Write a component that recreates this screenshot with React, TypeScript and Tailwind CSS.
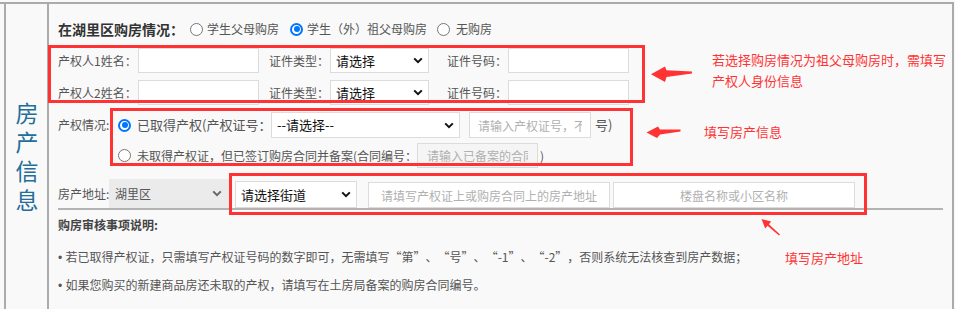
import React from "react";

function Radio({ checked }: { checked?: boolean }) {
  if (checked) {
    return (
      <span className="w-[13px] h-[13px] rounded-full border-2 border-[#0075ff] bg-white flex items-center justify-center shrink-0">
        <span className="w-[6px] h-[6px] rounded-full bg-[#0075ff]" />
      </span>
    );
  }
  return <span className="block w-[13px] h-[13px] rounded-full border border-[#767676] bg-white shrink-0" />;
}

function Chevron({ color = "#111" }: { color?: string }) {
  return (
    <svg width="10" height="7" viewBox="0 0 10 7" className="shrink-0">
      <path d="M1.2 1.4 L5 5.2 L8.8 1.4" stroke={color} strokeWidth="2" fill="none" />
    </svg>
  );
}

function Sel({ text, className }: { text: string; className: string }) {
  return (
    <div className={`flex items-center justify-between bg-white border border-[#dcdcdc] pl-[5px] pr-[5px] shrink-0 ${className}`}>
      <span className="text-[13px] text-[#111] whitespace-nowrap">{text}</span>
      <Chevron />
    </div>
  );
}

function Open() {
  return <span className="inline-block w-[12px] text-right">“</span>;
}
function Close() {
  return <span className="inline-block w-[12px] text-left">”</span>;
}

function Bullet() {
  return <span className="font-['Liberation_Sans',sans-serif]">•&nbsp;</span>;
}

export default function App() {
  return (
    <div className="relative w-[955px] h-[309px] bg-[#f9f9f9] pt-[2px] overflow-hidden font-['Noto_Sans_CJK_SC','Noto_Sans',sans-serif]">
      <div className="flex w-[954px] h-[320px] border-t-2 border-[#ababab]">
        <div className="w-[4px] shrink-0" />
        <div className="w-[45px] shrink-0 border-l-2 border-r-2 border-[#ababab] flex items-center justify-center pb-[6px]">
          <span className="[writing-mode:vertical-rl] text-[23px] leading-[23px] tracking-[6px] text-[#236d99]">房产信息</span>
        </div>
        <div className="flex-1 border-r-2 border-[#ababab] pl-[9px] pr-[9px] text-[12px] text-[#555]">
          {/* title row */}
          <div className="flex items-center h-[20px] mt-[15px]">
            <span className="w-[132px] text-[14px] font-bold text-[#333] whitespace-nowrap">在湖里区购房情况：</span>
            <Radio />
            <span className="ml-[4px] w-[72px] whitespace-nowrap">学生父母购房</span>
            <span className="ml-[11px]"><Radio checked /></span>
            <span className="ml-[4px] w-[120px] whitespace-nowrap">学生（外）祖父母购房</span>
            <span className="ml-[10px]"><Radio /></span>
            <span className="ml-[6px] whitespace-nowrap">无购房</span>
          </div>

          {/* owner rows */}
          {["产权人1姓名：", "产权人2姓名："].map((lbl, i) => (
            <div key={lbl} className={`flex items-center h-[25px] ${i === 0 ? "mt-[9px]" : "mt-[7px]"}`}>
              <span className="w-[80px] whitespace-nowrap">{lbl}</span>
              <input readOnly className="w-[121px] h-[25px] border border-[#dcdcdc] bg-white outline-none" />
              <span className="ml-[10px] w-[61px] whitespace-nowrap">证件类型：</span>
              <Sel text="请选择" className="w-[99px] h-[25px]" />
              <span className="ml-[18px] w-[61px] whitespace-nowrap">证件号码：</span>
              <input readOnly className="w-[121px] h-[25px] border border-[#dcdcdc] bg-white outline-none" />
            </div>
          ))}

          {/* property status */}
          <div className="flex items-center h-[26px] mt-[7px]">
            <span className="w-[60px] whitespace-nowrap">产权情况:</span>
            <Radio checked />
            <span className="ml-[6px] w-[134px] text-[13px] whitespace-nowrap">已取得产权(产权证号：</span>
            <Sel text="--请选择--" className="w-[189px] h-[26px]" />
            <input
              readOnly
              placeholder="请输入产权证号，不需要填写“第”"
              className="ml-[9px] w-[122px] h-[26px] border border-[#dcdcdc] bg-white px-[8px] text-[12px] outline-none placeholder:text-[#b0b0b0]"
            />
            <span className="ml-[4px] text-[13px] whitespace-nowrap">号)</span>
          </div>
          <div className="flex items-center h-[25px] mt-[5px]">
            <span className="w-[60px] shrink-0" />
            <Radio />
            <span className="ml-[6px] w-[280px] whitespace-nowrap">未取得产权证，但已签订购房合同并备案(合同编号：</span>
            <input
              readOnly
              placeholder="请输入已备案的合同编号"
              className="w-[121px] h-[25px] border border-[#dcdcdc] bg-[#f5f5f5] px-[9px] text-[12px] outline-none placeholder:text-[#b0b0b0]"
            />
            <span className="ml-[2px] whitespace-nowrap">)</span>
          </div>

          {/* address */}
          <div className="flex items-end mt-[11px] border-b-2 border-[#b3b3b3]">
            <span className="w-[51px] self-center whitespace-nowrap">房产地址:</span>
            <div className="w-[121px] h-[29px] bg-[#ebebeb] flex items-center justify-between pl-[6px] pr-[8px] shrink-0">
              <span className="text-[12px] text-[#555]">湖里区</span>
              <Chevron color="#666" />
            </div>
            <Sel text="请选择街道" className="ml-[5px] w-[122px] h-[27px]" />
            <input
              readOnly
              placeholder="请填写产权证上或购房合同上的房产地址"
              className="ml-[11px] w-[242px] h-[26px] border border-[#dcdcdc] bg-white text-center text-[12px] outline-none placeholder:text-[#b0b0b0]"
            />
            <input
              readOnly
              placeholder="楼盘名称或小区名称"
              className="ml-[3px] w-[242px] h-[26px] border border-[#dcdcdc] bg-white text-center text-[12px] outline-none placeholder:text-[#b0b0b0]"
            />
          </div>

          {/* notes */}
          <div className="mt-[5px] h-[20px] leading-[20px] font-bold text-[#444] whitespace-nowrap">购房审核事项说明:</div>
          <div className="mt-[12px] h-[20px] leading-[20px] whitespace-nowrap">
            <Bullet />若已取得产权证，只需填写产权证号码的数字即可，无需填写<Open />第<Close />、<Open />号<Close />、<Open />-1<Close />、<Open />-2<Close />，否则系统无法核查到房产数据；
          </div>
          <div className="mt-[8px] h-[20px] leading-[20px] whitespace-nowrap">
            <Bullet />如果您购买的新建商品房还未取的产权，请填写在土房局备案的购房合同编号。
          </div>
        </div>
      </div>

      {/* annotation overlays */}
      <div className="absolute left-[48px] top-[45px] w-[597px] h-[58px] border-[3px] border-[#ff3333]" />
      <div className="absolute left-[110px] top-[108px] w-[523px] h-[58px] border-[3px] border-[#ff3333]" />
      <div className="absolute left-[229px] top-[173px] w-[638px] h-[42px] border-[3px] border-[#ff3333]" />

      <svg className="absolute left-0 top-0 pointer-events-none" width="955" height="309" viewBox="0 0 955 309">
        <polygon points="651,74.3 665,66.5 666.5,70.3 692,71.5 692,73.5 666.5,77 665,82" fill="#ff3333" />
        <polygon points="646.5,132.5 658,126.5 660,129.5 680.5,129.5 680.5,131.5 660,134.5 657,138" fill="#ff3333" />
        <polygon points="761.5,219 771.2,221.6 768.9,224.3 780,234.4 779,235.6 767.5,225.7 765.2,228.4" fill="#ff3333" />
      </svg>

      <div className="absolute left-[712px] top-[49px] text-[13px] leading-[21px] text-[#ff3333] whitespace-nowrap">
        若选择购房情况为祖父母购房时，需填写
        <br />
        产权人身份信息
      </div>
      <div className="absolute left-[704px] top-[121px] text-[13px] leading-[21px] text-[#ff3333] whitespace-nowrap">填写房产信息</div>
      <div className="absolute left-[785px] top-[247px] text-[13px] leading-[21px] text-[#ff3333] whitespace-nowrap">填写房产地址</div>
    </div>
  );
}
